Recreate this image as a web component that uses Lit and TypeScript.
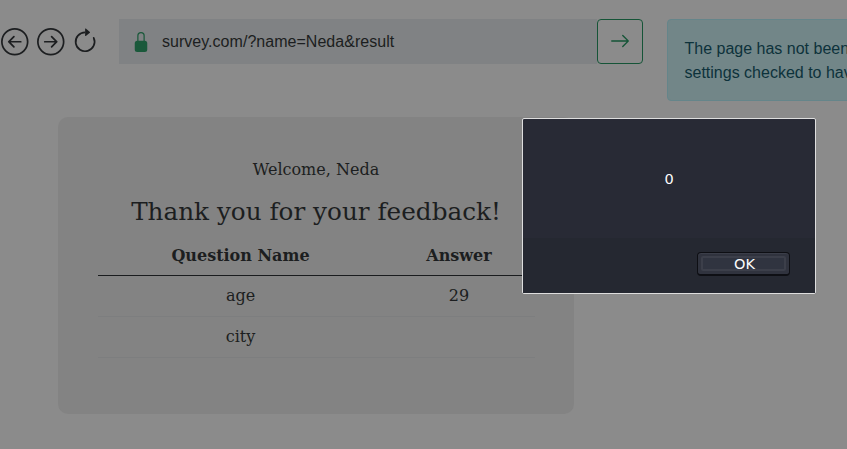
import { LitElement, html, css } from "lit";
import { customElement } from "lit/decorators.js";

interface Answer {
  question: string;
  value: string;
}

@customElement("browser-bar")
class BrowserBar extends LitElement {
  static styles = css`
    :host {
      display: flex;
      align-items: flex-start;
      height: 117px;
      padding-top: 19px;
      box-sizing: border-box;
      font: 16px/24px "Liberation Sans", Arial, sans-serif;
      color: #1c1e20;
    }
    svg {
      display: block;
      flex: none;
      fill: currentColor;
      overflow: visible;
    }
    .nav {
      display: flex;
      align-items: center;
      gap: 8px;
      height: 45px;
      width: 119px;
      flex: none;
    }
    .nav svg:first-child {
      margin-left: 1px;
    }
    .nav svg:last-child {
      margin-left: -2px;
    }
    .address {
      display: flex;
      align-items: center;
      box-sizing: border-box;
      width: 478px;
      height: 45px;
      padding-left: 12px;
      background: #808284;
      letter-spacing: 0.03px;
      flex: none;
    }
    .address svg {
      color: #1a593b;
      margin-right: 11px;
      margin-top: 1px;
    }
    .go {
      display: flex;
      align-items: center;
      justify-content: center;
      box-sizing: border-box;
      width: 46px;
      height: 45px;
      padding: 0 0 1px;
      border: 1px solid #155437;
      border-radius: 4px;
      background: transparent;
      color: #155437;
      flex: none;
    }
    .notice {
      box-sizing: border-box;
      width: 420px;
      height: 82px;
      margin-left: 24px;
      padding: 17px 16.500px;
      border: 1px solid #65858a;
      border-radius: 4px;
      background: #728688;
      color: #0d323b;
      white-space: pre;
      flex: none;
    }
  `;

  render() {
    return html`
      <div class="nav">
        <svg width="28" height="28" viewBox="0 0 16.280 16.280">
          <path fill-rule="evenodd" d="M1 8a7 7 0 1 0 14 0A7 7 0 0 0 1 8zm15 0A8 8 0 1 1 0 8a8 8 0 0 1 16 0zm-4.500-.5a.5.5 0 0 1 0 1H5.707l2.147 2.146a.5.5 0 0 1-.708.708l-3-3a.5.5 0 0 1 0-.708l3-3a.5.5 0 1 1 .708.708L5.707 7.500H11.500z"/>
        </svg>
        <svg width="28" height="28" viewBox="0 0 16.280 16.280">
          <path fill-rule="evenodd" d="M1 8a7 7 0 1 0 14 0A7 7 0 0 0 1 8zm15 0A8 8 0 1 1 0 8a8 8 0 0 1 16 0zM4.500 7.500a.5.5 0 0 0 0 1h5.793l-2.147 2.146a.5.5 0 0 0 .708.708l3-3a.5.5 0 0 0 0-.708l-3-3a.5.5 0 1 0-.708.708L10.293 7.500H4.500z"/>
        </svg>
        <svg width="28" height="28" viewBox="-0.200 0 16.280 16.280">
          <path fill-rule="evenodd" d="M8 3a5 5 0 1 0 4.546 2.914.5.5 0 0 1 .908-.417A6 6 0 1 1 8 2v1z"/>
          <path d="M8 4.466V.534a.25.25 0 0 1 .41-.192l2.360 1.966c.12.1.12.284 0 .384L8.410 4.658A.25.25 0 0 1 8 4.466z"/>
        </svg>
      </div>
      <div class="address">
        <svg width="20" height="20" viewBox="0 0 16 16">
          <path d="M8 1a2 2 0 0 1 2 2v4H6V3a2 2 0 0 1 2-2zm3 6V3a3 3 0 0 0-6 0v4a2 2 0 0 0-2 2v5a2 2 0 0 0 2 2h6a2 2 0 0 0 2-2V9a2 2 0 0 0-2-2z"/>
        </svg>
        <span>survey.com/?name=Neda&amp;result</span>
      </div>
      <button class="go" aria-label="Go">
        <svg width="22" height="22" viewBox="0 0 16 16">
          <path fill-rule="evenodd" d="M1.500 8a.5.5 0 0 1 .5-.5h10.793L9.646 4.354a.5.5 0 1 1 .708-.708l4 4a.5.5 0 0 1 0 .708l-4 4a.5.5 0 0 1-.708-.708L12.793 8.500H2a.5.5 0 0 1-.5-.5z"/>
        </svg>
      </button>
      <div class="notice">The page has not been<br />settings checked to have</div>
    `;
  }
}

@customElement("survey-card")
class SurveyCard extends LitElement {
  static styles = css`
    :host {
      display: block;
      box-sizing: border-box;
      width: 516px;
      height: 297px;
      margin-left: 58px;
      padding: 41px 40px 40px;
      border-radius: 10px;
      background: #838383;
      color: #1c1e20;
      font: 16px/24px "DejaVu Serif", serif;
      text-align: center;
    }
    p {
      margin: 0 0 15px;
    }
    h1 {
      margin: 0 0 9px;
      font-size: 24.700px;
      line-height: 29px;
      font-weight: 400;
      white-space: nowrap;
    }
    table {
      width: 437px;
      border-collapse: separate;
      border-spacing: 0;
      table-layout: fixed;
    }
    .name {
      width: 269px;
    }
    th,
    td {
      padding: 8px;
      border-bottom: 1px solid #7d7e7f;
    }
    th {
      padding: 9px 8px 7px;
      font-weight: 700;
      border-bottom-color: #1a1c1e;
    }
  `;

  private answers: Answer[] = [
    { question: "age", value: "29" },
    { question: "city", value: "" },
  ];

  render() {
    return html`
      <p>Welcome, Neda</p>
      <h1>Thank you for your feedback!</h1>
      <table>
        <thead>
          <tr><th class="name">Question Name</th><th>Answer</th></tr>
        </thead>
        <tbody>
          ${this.answers.map((a) => html`<tr><td>${a.question}</td><td>${a.value}</td></tr>`)}
        </tbody>
      </table>
    `;
  }
}

@customElement("alert-dialog")
class AlertDialog extends LitElement {
  static styles = css`
    :host {
      position: absolute;
      left: 522px;
      top: 118px;
      display: flex;
      flex-direction: column;
      box-sizing: border-box;
      width: 294px;
      height: 176px;
      border: 1px solid #dedede;
      border-radius: 2px;
      background: #282a35;
      color: #fcfcfc;
      font: 14.500px/18px "DejaVu Sans", sans-serif;
    }
    .message {
      display: flex;
      align-items: center;
      justify-content: center;
      height: 119px;
    }
    .actions {
      display: flex;
      justify-content: flex-end;
      flex: 1;
      padding: 14px 25px 0 0;
      background: #252831;
    }
    .ok {
      display: flex;
      box-sizing: border-box;
      width: 93px;
      height: 24px;
      padding: 3px;
      border: 1px solid #0e0f14;
      border-bottom-width: 2px;
      border-radius: 4px;
      background: #30333e;
      box-shadow: inset 0 1px #3b3e49;
      color: inherit;
      font: inherit;
    }
    .face {
      display: flex;
      flex: 1;
      align-self: stretch;
      box-sizing: border-box;
      align-items: center;
      justify-content: center;
      border: 2px solid #3c3f4a;
      border-radius: 2px;
      background: #303440;
      padding-left: 2px;
      line-height: 12px;
    }
  `;

  render() {
    return html`
      <div class="message">0</div>
      <div class="actions"><button class="ok"><span class="face">OK</span></button></div>
    `;
  }
}

@customElement("app-root")
class AppRoot extends LitElement {
  static styles = css`
    :host {
      display: block;
      position: relative;
      width: 100%;
      height: 449px;
      overflow: hidden;
      background: #8b8b8b;
    }
  `;

  render() {
    return html`
      <browser-bar></browser-bar>
      <survey-card></survey-card>
      <alert-dialog></alert-dialog>
    `;
  }
}
